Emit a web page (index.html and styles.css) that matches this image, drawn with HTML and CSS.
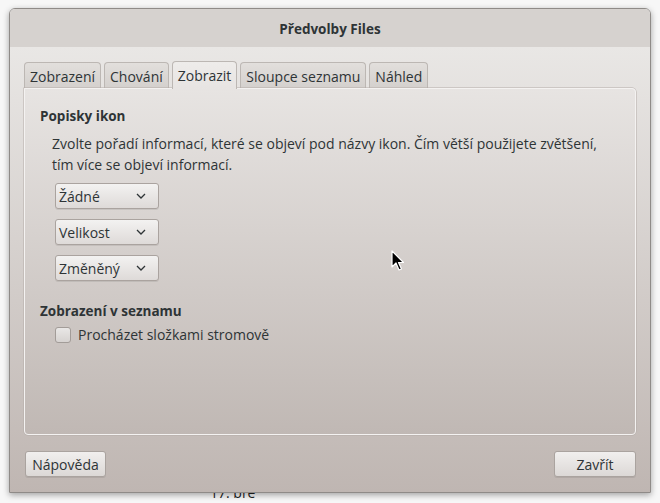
FILE: index.html
```html
<!DOCTYPE html>
<html lang="cs">
<head>
<meta charset="utf-8">
<title>Předvolby Files</title>
<link rel="stylesheet" href="styles.css">
</head>
<body>
<div class="desktop">
  <div class="behind">17. bře</div>
  <div class="window">
    <div class="titlebar">Předvolby Files</div>
    <div class="content">
      <div class="tabs">
        <div class="tab">Zobrazení</div>
        <div class="tab">Chování</div>
        <div class="tab active">Zobrazit</div>
        <div class="tab">Sloupce seznamu</div>
        <div class="tab">Náhled</div>
      </div>
      <div class="panel">
        <div class="heading">Popisky ikon</div>
        <div class="desc">Zvolte pořadí informací, které se objeví pod názvy ikon. Čím větší použijete zvětšení, tím více se objeví informací.</div>
        <div class="combos">
          <div class="combo"><span>Žádné</span><svg class="chev" width="10" height="6" viewBox="0 0 10 6"><path d="M1 1 L5 5 L9 1" fill="none" stroke="#2e3436" stroke-width="1.3"/></svg></div>
          <div class="combo"><span>Velikost</span><svg class="chev" width="10" height="6" viewBox="0 0 10 6"><path d="M1 1 L5 5 L9 1" fill="none" stroke="#2e3436" stroke-width="1.3"/></svg></div>
          <div class="combo"><span>Změněný</span><svg class="chev" width="10" height="6" viewBox="0 0 10 6"><path d="M1 1 L5 5 L9 1" fill="none" stroke="#2e3436" stroke-width="1.3"/></svg></div>
        </div>
        <div class="heading second">Zobrazení v seznamu</div>
        <label class="check"><span class="box"></span><span>Procházet složkami stromově</span></label>
      </div>
      <div class="footer">
        <div class="btn help">Nápověda</div>
        <div class="btn close">Zavřít</div>
      </div>
    </div>
    <svg class="cursor" width="14" height="22" viewBox="0 0 14 22"><path d="M1 1 L1 17 L5 13 L8 20 L10.5 19 L7.5 12.5 L12.5 12.5 Z" fill="#000" stroke="#fff" stroke-width="1.2" stroke-linejoin="round"/></svg>
  </div>
</div>
</body>
</html>
```
FILE: styles.css
```css
* { box-sizing: border-box; }
html, body { margin: 0; padding: 0; }
body {
  background: #f7f7f7;
  font-family: "Open Sans", "Noto Sans", sans-serif;
  font-size: 14px;
  color: #2e3436;
  width: 660px;
  height: 503px;
  overflow: hidden;
}
.desktop {
  position: relative;
  width: 660px;
  height: 503px;
  padding: 8px 0 0 9px;
}
.behind {
  position: absolute;
  left: 210px;
  top: 483px;
  font-size: 14px;
  color: #222;
}
.window {
  position: relative;
  width: 642px;
  height: 485px;
  border: 1px solid #8f8b88;
  border-radius: 6px 6px 0 0;
  box-shadow: 0 2px 6px rgba(0,0,0,0.35);
  display: flex;
  flex-direction: column;
  overflow: hidden;
}
.titlebar {
  height: 38px;
  background: #d6d2cf;
  font-weight: 700;
  font-size: 13.5px;
  display: flex;
  align-items: center;
  justify-content: center;
  color: #2e3436;
  padding-top: 1px;
}
.content {
  flex: 1;
  background: linear-gradient(#e9e7e5, #bfb6b2);
  padding: 14px 14px 0 14px;
  display: flex;
  flex-direction: column;
}
.tabs {
  display: flex;
  gap: 3px;
  height: 27px;
  align-items: flex-end;
}
.tab {
  height: 26px;
  border: 1px solid #bcb7b3;
  border-bottom: none;
  border-radius: 4px 4px 0 0;
  background: linear-gradient(#e2dfdc, #d4d0cd);
  padding: 2px 5px 0 5px;
  display: flex;
  align-items: center;
  color: #2e3436;
}
.tab.active {
  height: 28px;
  background: linear-gradient(#eeecea, #e7e4e2);
  margin-bottom: -1px;
  position: relative;
  z-index: 1;
  padding-top: 0;
}
.panel {
  height: 347px;
  border: 1px solid #f4f2f1;
  border-radius: 0 4px 4px 4px;
  background: linear-gradient(#e7e4e2, #c0b8b4);
  box-shadow: 0 0 0 0.5px #b3aca8;
  padding: 18px 15px 0 15px;
  display: flex;
  flex-direction: column;
  align-items: flex-start;
}
.heading {
  font-weight: 700;
  font-size: 13.5px;
  line-height: 19px;
}
.heading.second { margin-top: 21px; }
.desc {
  margin-top: 7px;
  padding-left: 12px;
  line-height: 21px;
  width: 580px;
}
.combos {
  margin-top: 8px;
  padding-left: 15px;
  display: flex;
  flex-direction: column;
  gap: 10px;
}
.combo {
  width: 104px;
  height: 26px;
  border: 1px solid #aaa39f;
  border-radius: 3px;
  background: linear-gradient(#f3f2f1, #dedad8);
  box-shadow: 0 1px 0 rgba(0,0,0,0.08);
  display: flex;
  align-items: center;
  justify-content: space-between;
  padding: 0 12px 0 3px;
}
.chev { display: block; }
.check {
  margin-top: 4px;
  padding-left: 15px;
  display: flex;
  align-items: center;
  gap: 7px;
  line-height: 19px;
}
.box {
  width: 16px;
  height: 16px;
  border: 1px solid #a29c98;
  border-radius: 3px;
  background: linear-gradient(#e9e7e6, #d6d2d0);
}
.footer {
  display: flex;
  justify-content: space-between;
  margin-top: 16px;
}
.btn {
  height: 26px;
  border: 1px solid #aaa39f;
  border-radius: 3px;
  background: linear-gradient(#f1efee, #dcd8d6);
  box-shadow: 0 1px 0 rgba(0,0,0,0.08);
  display: flex;
  align-items: center;
  justify-content: center;
}
.help { width: 81px; margin-left: 1px; }
.close { width: 82px; }
.cursor {
  position: absolute;
  left: 381px;
  top: 241px;
}
```
